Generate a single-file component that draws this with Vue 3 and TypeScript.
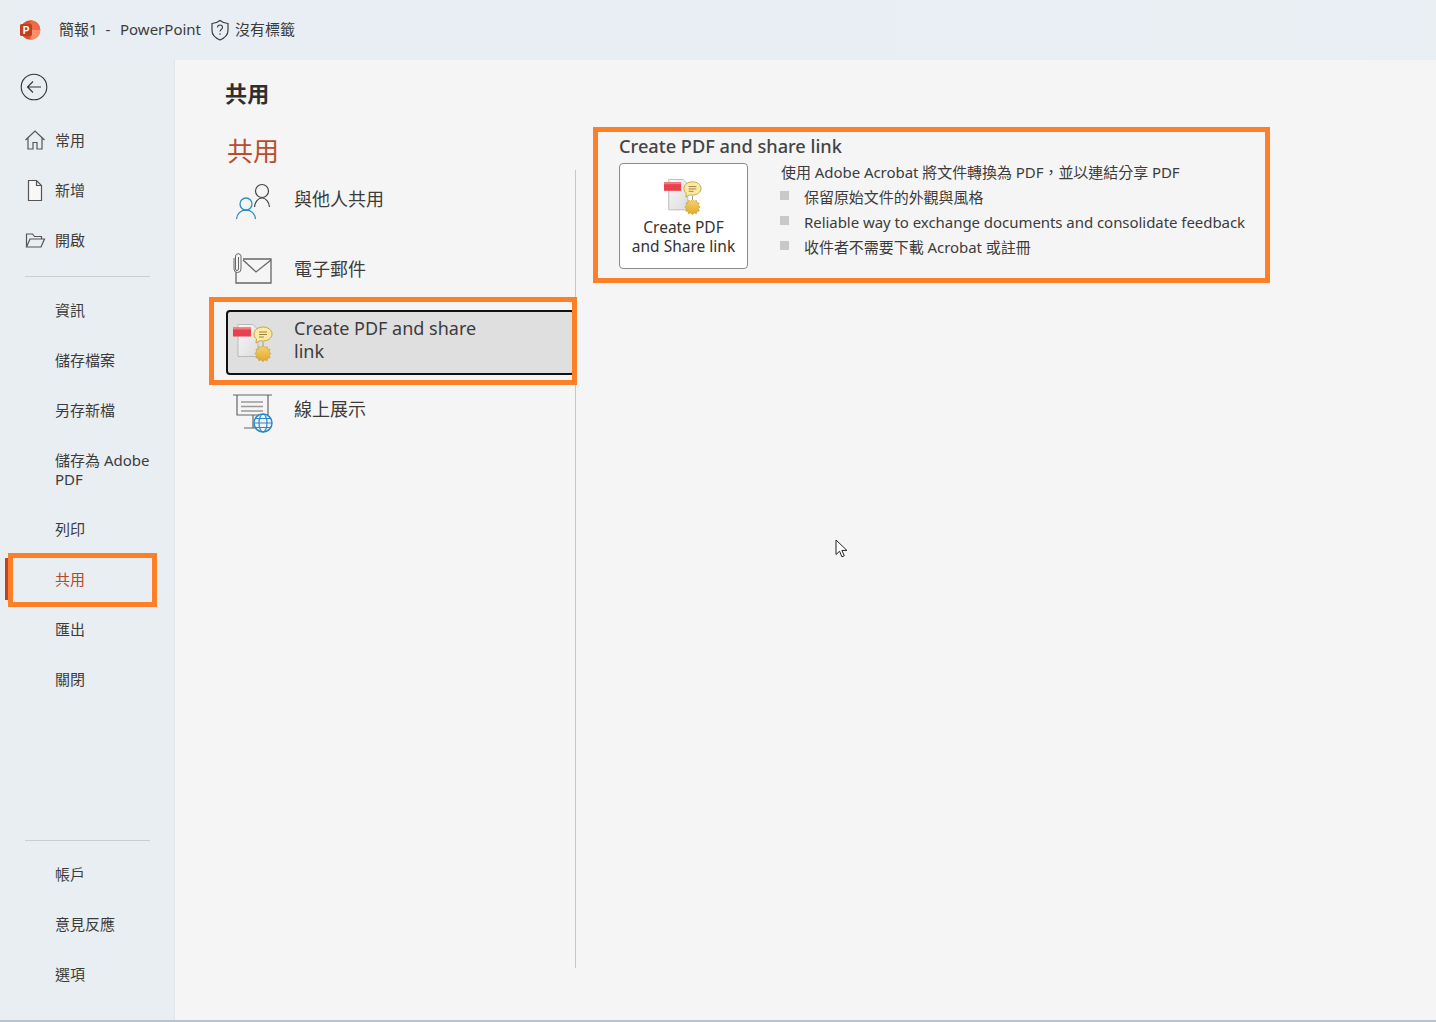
<script setup lang="ts">
interface NavItem { label: string; icon?: 'home' | 'file' | 'folder'; active?: boolean; tall?: boolean }
const groupA: NavItem[] = [
  { label: '常用', icon: 'home' },
  { label: '新增', icon: 'file' },
  { label: '開啟', icon: 'folder' },
]
const groupB: NavItem[] = [
  { label: '資訊' },
  { label: '儲存檔案' },
  { label: '另存新檔' },
  { label: '儲存為 Adobe PDF', tall: true },
  { label: '列印' },
  { label: '共用', active: true },
  { label: '匯出' },
  { label: '關閉' },
]
const groupC: NavItem[] = [{ label: '帳戶' }, { label: '意見反應' }, { label: '選項' }]
const bullets = ['保留原始文件的外觀與風格', 'Reliable way to exchange documents and consolidate feedback', '收件者不需要下載 Acrobat 或註冊']
</script>

<template>
  <div class="app">
    <svg class="defs" width="0" height="0" aria-hidden="true">
      <defs>
        <linearGradient id="gearFill" x1="0" y1="0" x2="0" y2="1">
          <stop offset="0" stop-color="#f7d568" />
          <stop offset="1" stop-color="#e2a52e" />
        </linearGradient>
        <linearGradient id="docFill" x1="0" y1="0" x2="1" y2="1">
          <stop offset="0" stop-color="#f8f8f8" />
          <stop offset="1" stop-color="#dcdcdc" />
        </linearGradient>
        <symbol id="pdfShare" viewBox="0 0 40 40">
          <path d="M5 1.500h15l5 5v27H5z" fill="url(#docFill)" stroke="#b9b9b9" stroke-width="1" />
          <rect x="0" y="4.500" width="18" height="9" fill="#e8404c" />
          <rect x="0" y="4.500" width="18" height="2" fill="#f47a80" />
          <path d="M30 19v5" stroke="#9a9a9a" stroke-width="1" />
          <path d="M30 4c5 0 9 3 9 7s-4 7-9 7c-1 0-2 0-3-.3L23 20l.5-4C22 15 21 13 21 11c0-4 4-7 9-7z" fill="#fbe9a6" stroke="#c9a23e" stroke-width="1" />
          <path d="M26 9h8M26 11.500h8M26 14h5" stroke="#a08436" stroke-width="1" fill="none" />
          <path d="M30 22.500l1.700 2 2.400-1 .5 2.500 2.500.5-1 2.400 2 1.700-2 1.700 1 2.400-2.500.5-.5 2.500-2.400-1-1.700 2-1.700-2-2.400 1-.5-2.500-2.500-.5 1-2.400-2-1.700 2-1.700-1-2.400 2.500-.5.5-2.500 2.400 1z" fill="url(#gearFill)" stroke="#c9932b" stroke-width=".6" />
        </symbol>
      </defs>
    </svg>

    <header class="titlebar">
      <svg class="logo" width="22" height="22" viewBox="0 0 22 22">
        <circle cx="11.500" cy="11" r="9.800" fill="#d9512c" />
        <path d="M11.500 1.200a9.800 9.800 0 0 1 9.800 9.800h-9.800z" fill="#ed6c47" />
        <path d="M11.500 11h9.800a9.800 9.800 0 0 1-9.800 9.800z" fill="#ff8f6b" />
        <rect x="1" y="5" width="12" height="12" rx="1.500" fill="#c43e1c" />
        <text x="3.800" y="15" class="logo-p">P</text>
      </svg>
      <span class="doc">簡報1&nbsp; -&nbsp; <span class="app-name">PowerPoint</span></span>
      <svg class="shield" width="20" height="22" viewBox="0 0 20 22">
        <path d="M10 1.500c2.500 2 5 2.700 8 3v7c0 4.500-3.500 7.500-8 9.500-4.500-2-8-5-8-9.500v-7c3-.3 5.500-1 8-3z" fill="none" stroke="#3c3c3c" stroke-width="1.200" />
        <path d="M7.500 8.500c0-1.500 1.100-2.500 2.500-2.500s2.500 1 2.500 2.400c0 2-2.500 2.100-2.500 4" fill="none" stroke="#3c3c3c" stroke-width="1.100" />
        <circle cx="10" cy="15" r=".8" fill="#3c3c3c" />
      </svg>
      <span class="label-state">沒有標籤</span>
    </header>

    <div class="body">
      <nav class="nav">
        <button class="back" type="button" aria-label="back">
          <svg width="28" height="28" viewBox="0 0 28 28">
            <circle cx="14" cy="14" r="12.800" fill="none" stroke="#333" stroke-width="1.100" />
            <path d="M21 14H7.500M13 8.500 7.500 14l5.500 5.500" fill="none" stroke="#333" stroke-width="1.100" />
          </svg>
        </button>
        <div class="nav-group">
          <div v-for="item in groupA" :key="item.label" class="nav-item">
            <svg v-if="item.icon === 'home'" class="nav-icon" width="22" height="22" viewBox="0 0 22 22">
              <path d="M1.500 11 11 2l9.500 9M4 9v11h5v-6.500h4V20h5V9" fill="none" stroke="#555" stroke-width="1.200" />
            </svg>
            <svg v-else-if="item.icon === 'file'" class="nav-icon" width="22" height="22" viewBox="0 0 22 22">
              <path d="M4.500 1.500h8l5 5v15h-13zM12.500 1.500v5h5" fill="#f8f8f8" stroke="#555" stroke-width="1.200" />
            </svg>
            <svg v-else class="nav-icon" width="22" height="22" viewBox="0 0 22 22">
              <path d="M2.500 18V5h6l2 2.500h7V10M2.500 18l3.500-8h14.500L17 18z" fill="none" stroke="#555" stroke-width="1.200" />
            </svg>
            <span class="nav-text">{{ item.label }}</span>
          </div>
        </div>
        <hr class="nav-rule first" />
        <div class="nav-group">
          <div
            v-for="item in groupB"
            :key="item.label"
            class="nav-item"
            :class="{ active: item.active, tall: item.tall }"
          >
            <span class="nav-text">{{ item.label }}</span>
            <i v-if="item.active" class="active-bar"></i>
            <i v-if="item.active" class="mark nav-mark"></i>
          </div>
        </div>
        <div class="nav-spacer"></div>
        <hr class="nav-rule last" />
        <div class="nav-group">
          <div v-for="item in groupC" :key="item.label" class="nav-item">
            <span class="nav-text">{{ item.label }}</span>
          </div>
        </div>
      </nav>

      <main class="main">
        <h1 class="page-title">共用</h1>
        <div class="columns">
          <section class="left">
            <h2 class="section-head">共用</h2>
            <ul class="share-list">
              <li class="share-row">
                <svg class="row-icon" width="40" height="40" viewBox="0 0 40 40">
                  <circle cx="29" cy="11" r="6.500" fill="none" stroke="#444" stroke-width="1.200" />
                  <path d="M21.500 27c.5-5 3.500-9 7.500-9s7 4 7.500 9" fill="none" stroke="#444" stroke-width="1.200" />
                  <circle cx="13" cy="24" r="6" fill="#f5f5f5" stroke="#2e8cc7" stroke-width="1.300" />
                  <path d="M3.500 39c.5-5 4-9 9.500-9s9 4 9.500 9" fill="none" stroke="#2e8cc7" stroke-width="1.300" />
                </svg>
                <span>與他人共用</span>
              </li>
              <li class="share-row">
                <svg class="row-icon" width="40" height="40" viewBox="0 0 40 40">
                  <path d="M10 9h28v24H3V18" fill="none" stroke="#666" stroke-width="1.300" />
                  <path d="M10 10l13 12L38 10" fill="none" stroke="#666" stroke-width="1.300" />
                  <path d="M5.500 7v12a1.500 1.500 0 0 1-3 0V6a2.800 2.800 0 0 1 5.500 0v13a3.500 3.500 0 0 1-7 0V8" fill="#f5f5f5" stroke="#666" stroke-width="1" />
                </svg>
                <span>電子郵件</span>
              </li>
              <li class="share-row selected">
                <svg class="row-icon" width="40" height="40"><use href="#pdfShare" /></svg>
                <span class="wrap">Create PDF and share link</span>
                <i class="mark row-mark"></i>
              </li>
              <li class="share-row">
                <svg class="row-icon" width="40" height="40" viewBox="0 0 40 40">
                  <path d="M0 5h39M4 5v20h31V5M20 25v13M11 38h12" fill="none" stroke="#666" stroke-width="1.200" />
                  <path d="M8 12h22M8 16.500h22M8 21h22" stroke="#999" stroke-width="1.300" />
                  <circle cx="30" cy="33" r="9" fill="#f5f5f5" stroke="#2b88c8" stroke-width="1.500" />
                  <ellipse cx="30" cy="33" rx="4" ry="9" fill="none" stroke="#2b88c8" stroke-width="1.200" />
                  <path d="M21 33h18M22.500 28.500h15M22.500 37.500h15" stroke="#2b88c8" stroke-width="1.200" />
                </svg>
                <span>線上展示</span>
              </li>
            </ul>
          </section>

          <section class="detail">
            <h3 class="detail-title">Create PDF and share link</h3>
            <div class="detail-body">
              <button class="action" type="button">
                <svg width="40" height="38" viewBox="0 0 40 38"><use href="#pdfShare" /></svg>
                <span>Create PDF<br />and Share link</span>
              </button>
              <div class="desc">
                <p>使用 Adobe Acrobat 將文件轉換為 PDF，並以連結分享 PDF</p>
                <ul>
                  <li v-for="b in bullets" :key="b"><i class="square"></i>{{ b }}</li>
                </ul>
              </div>
            </div>
          </section>
        </div>
      </main>
    </div>

    <svg class="cursor" width="14" height="20" viewBox="0 0 14 20">
      <path d="M1 1v14.500l3.600-3.300 2.300 5.600 2.400-1-2.400-5.400h5z" fill="#fff" stroke="#222" stroke-width="1" />
    </svg>
  </div>
</template>

<style>
html, body { margin: 0; background: #e9eef3; }
</style>

<style scoped>
.app {
  position: relative;
  width: 1436px;
  height: 1022px;
  overflow: hidden;
  display: flex;
  flex-direction: column;
  background: #e9eef3;
  border-bottom: 2px solid #b7c3cf;
  box-sizing: border-box;
  font-family: "Noto Sans", "Noto Sans CJK TC", sans-serif;
  color: #3c3c3c;
}
.defs { position: absolute; }
.titlebar {
  height: 60px;
  flex: none;
  display: flex;
  align-items: center;
  padding: 0 0 0 19px;
  font-size: 15px;
  box-sizing: border-box;
  background: linear-gradient(90deg, #e9eef3, #e8eef3 60%, #eaeff4);
}
.logo { flex: none; }
.logo-p { font: bold 10px "Liberation Sans", sans-serif; fill: #fff; }
.doc { margin-left: 18px; padding-bottom: 3px; }
.app-name { margin-left: 2px; }
.shield { margin-left: 9px; }
.label-state { margin-left: 5px; padding-bottom: 3px; }
.body { flex: 1; display: flex; min-height: 0; }
.nav {
  width: 175px;
  flex: none;
  display: flex;
  flex-direction: column;
  padding-bottom: 21px;
  box-sizing: border-box;
  font-size: 15px;
  line-height: 19px;
}
.back {
  all: unset;
  display: block;
  width: 28px;
  height: 28px;
  margin: 13px 0 14px 20px;
}
.nav-group { display: flex; flex-direction: column; }
.nav-item {
  position: relative;
  height: 50px;
  display: flex;
  align-items: center;
  padding-left: 56px;
  box-sizing: border-box;
}
.nav-text { margin-left: -1px; }
.nav-item.tall { height: 69px; padding-right: 20px; }
.nav-item.active { color: #b7472a; }
.nav-icon { position: absolute; left: 24px; top: 14px; }
.nav-rule { border: 0; height: 1px; background: #c9ced3; margin: 0 25px 0; }
.nav-rule.first { margin-top: 11px; margin-bottom: 8px; }
.nav-rule.last { margin-bottom: 8px; }
.nav-spacer { flex: 1; }
.active-bar {
  position: absolute;
  left: 5px;
  top: 4px;
  bottom: 4px;
  width: 3px;
  background: #b7472a;
}
.mark { position: absolute; border: 5px solid #fd7f28; box-sizing: border-box; pointer-events: none; }
.nav-mark { left: 8px; width: 149px; top: -1px; bottom: -3px; }
.main {
  flex: 1;
  min-width: 0;
  background: #f5f5f5;
  padding-left: 51px;
  box-sizing: border-box;
  box-shadow: -1px 0 0 #e2e7ec;
}
.page-title {
  margin: 0 0 6px 0;
  height: 66px;
  display: flex;
  align-items: center;
  box-sizing: border-box;
  font-size: 22px;
  font-weight: 700;
  color: #2f2f2f;
  line-height: 68px;
  letter-spacing: .3px;
  text-indent: -1px;
}
.columns { display: flex; align-items: flex-start; }
.left { width: 350px; flex: none; }
.section-head {
  margin: 0;
  height: 38px;
  padding-left: 1px;
  font-size: 26px;
  font-weight: 400;
  line-height: 38px;
  color: #b94d2f;
}
.share-list {
  list-style: none;
  margin: 0;
  padding: 0;
  height: 798px;
  border-right: 1px solid #c8c8c8;
  box-sizing: border-box;
  display: flex;
  flex-direction: column;
  gap: 10px;
}
.share-row {
  position: relative;
  height: 60px;
  flex: none;
  display: flex;
  align-items: center;
  font-size: 18px;
  line-height: 23px;
  box-sizing: border-box;
  padding-left: 7px;
}
.share-row > span { padding-bottom: 2px; }
.row-icon { flex: none; margin-right: 21px; overflow: visible; }
.share-row.selected {
  height: 65px;
  margin-bottom: -5px;
  padding-left: 5px;
  background: #dfdfdf;
  border: 2px solid #111;
  border-radius: 4px;
}
.share-row > .wrap { width: 200px; padding-bottom: 6px; }
.row-mark { top: -15px; bottom: -12px; left: -19px; right: -4px; }
.detail {
  flex: none;
  width: 677px;
  height: 156px;
  margin: -5px 0 0 17px;
  padding-left: 21px;
  border: 5px solid #fd7f28;
  box-sizing: border-box;
}
.detail-title {
  margin: 0;
  height: 31px;
  font-size: 18.200px;
  font-weight: 500;
  line-height: 28px;
  color: #444;
}
.detail-body { display: flex; }
.action {
  all: unset;
  width: 129px;
  height: 106px;
  flex: none;
  box-sizing: border-box;
  background: #fff;
  border: 1px solid #8c8c8c;
  border-radius: 4px;
  display: flex;
  flex-direction: column;
  align-items: center;
  padding-top: 14px;
  text-align: center;
  font-size: 15.500px;
  line-height: 19px;
  color: #333;
}
.action svg { margin: 0 0 2px -2px; }
.desc { margin-left: 33px; font-size: 15px; line-height: 25px; margin-top: -3px; letter-spacing: -.05px; }
.desc p { margin: 0; }
.desc ul { list-style: none; margin: 0; padding: 0; }
.desc li { display: flex; align-items: center; }
.square {
  width: 9px;
  height: 9px;
  background: #c8c8c8;
  margin: -4px 15px 0 -1px;
  flex: none;
}
.cursor { position: absolute; left: 835px; top: 539px; }
</style>
